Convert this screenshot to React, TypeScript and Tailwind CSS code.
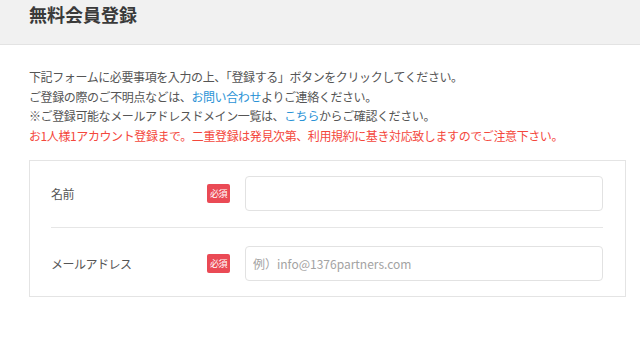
import React from 'react';

const jp = { fontFamily: '"Noto Sans CJK JP", "Noto Sans", sans-serif' };

const Badge: React.FC = () => (
  <span className="flex h-[19px] w-[23px] shrink-0 items-center justify-center rounded-[2px] bg-[#ea4a55] text-[9px] leading-none tracking-[-0.5px] text-white">
    必須
  </span>
);

const Row: React.FC<{ label: string; placeholder?: string; className?: string }> = ({
  label,
  placeholder,
  className,
}) => (
  <div className={`flex items-center ${className ?? ''}`}>
    <div className="w-[156px] shrink-0 text-[12px] tracking-[-0.5px] text-[#555]">{label}</div>
    <Badge />
    <input
      type="text"
      placeholder={placeholder}
      className="ml-[15px] h-[35px] min-w-0 flex-1 rounded-[4px] border border-[#e2e2e2] bg-white px-[7px] text-[12px] text-[#555] outline-none placeholder:text-[#a3a3a3]"
      style={jp}
    />
  </div>
);

export default function App() {
  return (
    <div className="h-[352px] w-[640px] overflow-hidden bg-white" style={jp}>
      {/* ヘッダー */}
      <div className="h-[45px] border-b border-[#e3e3e3] bg-[#f1f1f1] px-[29px]">
        <h1 className="pt-px text-[18px] font-bold leading-[27px] text-[#3a3a3a]">無料会員登録</h1>
      </div>

      {/* 説明文 */}
      <div className="px-[29px] pt-[22px] text-[12px] leading-[19.5px] tracking-[-0.4px] text-[#555]">
        <p>下記フォームに必要事項を入力の上、「登録する」ボタンをクリックしてください。</p>
        <p>
          ご登録の際のご不明点などは、<span className="text-[#2b93d6]">お問い合わせ</span>よりご連絡ください。
        </p>
        <p>
          ※ご登録可能なメールアドレスドメイン一覧は、<span className="text-[#2b93d6]">こちら</span>からご確認ください。
        </p>
        <p className="text-[#f4473c]">
          お1人様1アカウント登録まで。二重登録は発見次第、利用規約に基き対応致しますのでご注意下さい。
        </p>
      </div>

      {/* フォーム */}
      <div className="mx-[29px] mt-[15px] w-[597px] border border-[#e4e4e4] py-[15px] pl-[21px] pr-[22px]">
        <Row label="名前" className="border-b border-[#e6e6e6] pb-[16px]" />
        <Row label="メールアドレス" placeholder="例）info@1376partners.com" className="pt-[18px]" />
      </div>
    </div>
  );
}
